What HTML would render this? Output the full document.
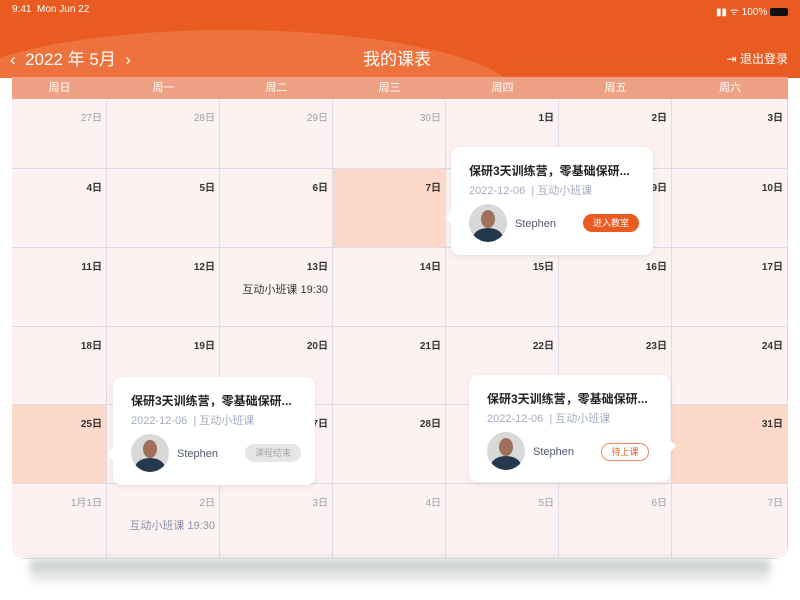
<!DOCTYPE html>
<html><head><meta charset="utf-8"><style>
*{margin:0;padding:0;box-sizing:border-box}
body{width:800px;height:600px;overflow:hidden;background:#fff;font-family:"Liberation Sans","Noto Sans CJK SC",sans-serif;position:relative}
.hdr{position:absolute;left:0;top:0;width:800px;height:78px;background:#e95b21;overflow:hidden}
.wave{position:absolute;left:-60px;top:30px;width:580px;height:140px;border-radius:50%;background:#ee7440;opacity:.9}
.status{position:absolute;top:4px;font-size:10px;color:#fff}
.nav{position:absolute;top:45px;color:#fff}
.wk{position:absolute;left:12px;top:77px;width:776px;height:22px;background:#eea184;display:flex}
.wk div{color:#fff;font-size:11px;text-align:center;line-height:22px}
.grid{position:absolute;left:12px;top:99px;width:776px;height:460px;background:#fdf2f1;border-radius:0 0 12px 12px;overflow:hidden}
.cell{position:absolute;border-right:1px solid #dcdde8;border-bottom:1px solid #dcdde8;font-size:10px;text-align:right;padding:10px 4px 0 0;color:#333;font-weight:bold}
.cell.g{color:#9a9db0;font-weight:normal}
.cell.h{background:#fdd9c9}
.ev{font-weight:normal;font-size:11px;color:#333;margin-top:8px}
.card{position:absolute;background:#fff;border-radius:9px;box-shadow:0 2px 8px rgba(0,0,0,.08)}
.card .t{position:absolute;left:18px;top:15px;font-size:12px;font-weight:bold;color:#222}
.card .s{position:absolute;left:18px;top:35px;font-size:11px;color:#a5abc3}
.av{position:absolute;left:18px;top:57px;width:38px;height:38px;border-radius:50%;background:#d8d8d8;overflow:hidden}
.av .h1{position:absolute;left:12px;top:6px;width:14px;height:18px;border-radius:50%;background:#a0705a}
.av .b{position:absolute;left:4px;top:24px;width:30px;height:20px;border-radius:50% 50% 0 0;background:#24394e}
.nm{position:absolute;left:64px;top:71px;font-size:11px;color:#505870}
.btn{position:absolute;top:67px;width:56px;height:18px;border-radius:9px;font-size:9px;text-align:center;line-height:18px}
.arrow{position:absolute;width:10px;height:10px;background:#fff;transform:rotate(45deg)}
.shadow{position:absolute;left:30px;top:560px;width:740px;height:26px;background:linear-gradient(#bfc3c4,#fff);filter:blur(4px)}
</style></head><body>
<div class="hdr"><div class="wave"></div>
<div class="status" style="left:12px">9:41&nbsp; Mon Jun 22</div>
<div class="status" style="right:12px">▮▮ ᯤ 100% <span style="display:inline-block;width:18px;height:8px;background:#111;border-radius:2px;vertical-align:-1px"></span></div>
<div class="nav" style="left:10px;font-size:17px">‹&nbsp;&nbsp;2022 年 5月&nbsp;&nbsp;›</div>
<div class="nav" style="left:363px;font-size:17px">我的课表</div>
<div class="nav" style="right:12px;font-size:12px;top:50px">⇥ 退出登录</div>
</div>
<div class="wk"><div style="width:95px">周日</div><div style="width:113px">周一</div><div style="width:113px">周二</div><div style="width:113px">周三</div><div style="width:113px">周四</div><div style="width:113px">周五</div><div style="width:116px">周六</div></div>
<div class="grid" id="g"></div>
<div class="shadow"></div>
<script>
var xs=[0,95,208,321,434,547,660,776],ys=[0,70,149,228,306,385,460];
var d=[["27日","28日","29日","30日","1日","2日","3日"],["4日","5日","6日","7日","8日","9日","10日"],["11日","12日","13日","14日","15日","16日","17日"],["18日","19日","20日","21日","22日","23日","24日"],["25日","26日","27日","28日","29日","30日","31日"],["1月1日","2日","3日","4日","5日","6日","7日"]];
var h="";for(var r=0;r<6;r++)for(var c=0;c<7;c++){var cl="cell";if(r==0&&c<4||r==5)cl+=" g";if((r==1&&c==3)||(r==4&&(c==0||c==6)))cl+=" h";var ev="";if(r==2&&c==2)ev='<div class="ev">互动小班课 19:30</div>';if(r==5&&c==1)ev='<div class="ev" style="color:#8a8ea5">互动小班课 19:30</div>';h+='<div class="'+cl+'" style="left:'+xs[c]+'px;top:'+ys[r]+'px;width:'+(xs[c+1]-xs[c])+'px;height:'+(ys[r+1]-ys[r])+'px">'+d[r][c]+ev+'</div>';}
document.getElementById("g").innerHTML=h;
</script>
<div class="card" style="left:451px;top:147px;width:202px;height:108px"><div class="arrow" style="left:-4px;top:65px"></div><div class="t">保研3天训练营，零基础保研...</div><div class="s">2022-12-06 &nbsp;| 互动小班课</div><div class="av"><div class="h1"></div><div class="b"></div></div><div class="nm">Stephen</div><div class="btn" style="left:132px;background:#e95b21;color:#fff">进入教室</div></div>
<div class="card" style="left:113px;top:377px;width:202px;height:108px"><div class="arrow" style="left:-4px;top:72px"></div><div class="t">保研3天训练营，零基础保研...</div><div class="s">2022-12-06 &nbsp;| 互动小班课</div><div class="av"><div class="h1"></div><div class="b"></div></div><div class="nm">Stephen</div><div class="btn" style="left:132px;background:#e6e6e6;color:#aaa">课程结束</div></div>
<div class="card" style="left:469px;top:375px;width:201px;height:107px"><div class="arrow" style="right:-4px;top:66px"></div><div class="t">保研3天训练营，零基础保研...</div><div class="s">2022-12-06 &nbsp;| 互动小班课</div><div class="av"><div class="h1"></div><div class="b"></div></div><div class="nm">Stephen</div><div class="btn" style="left:132px;top:68px;width:48px;border:1px solid #ef8a60;color:#e95b21;line-height:16px">待上课</div></div>
</body></html>
